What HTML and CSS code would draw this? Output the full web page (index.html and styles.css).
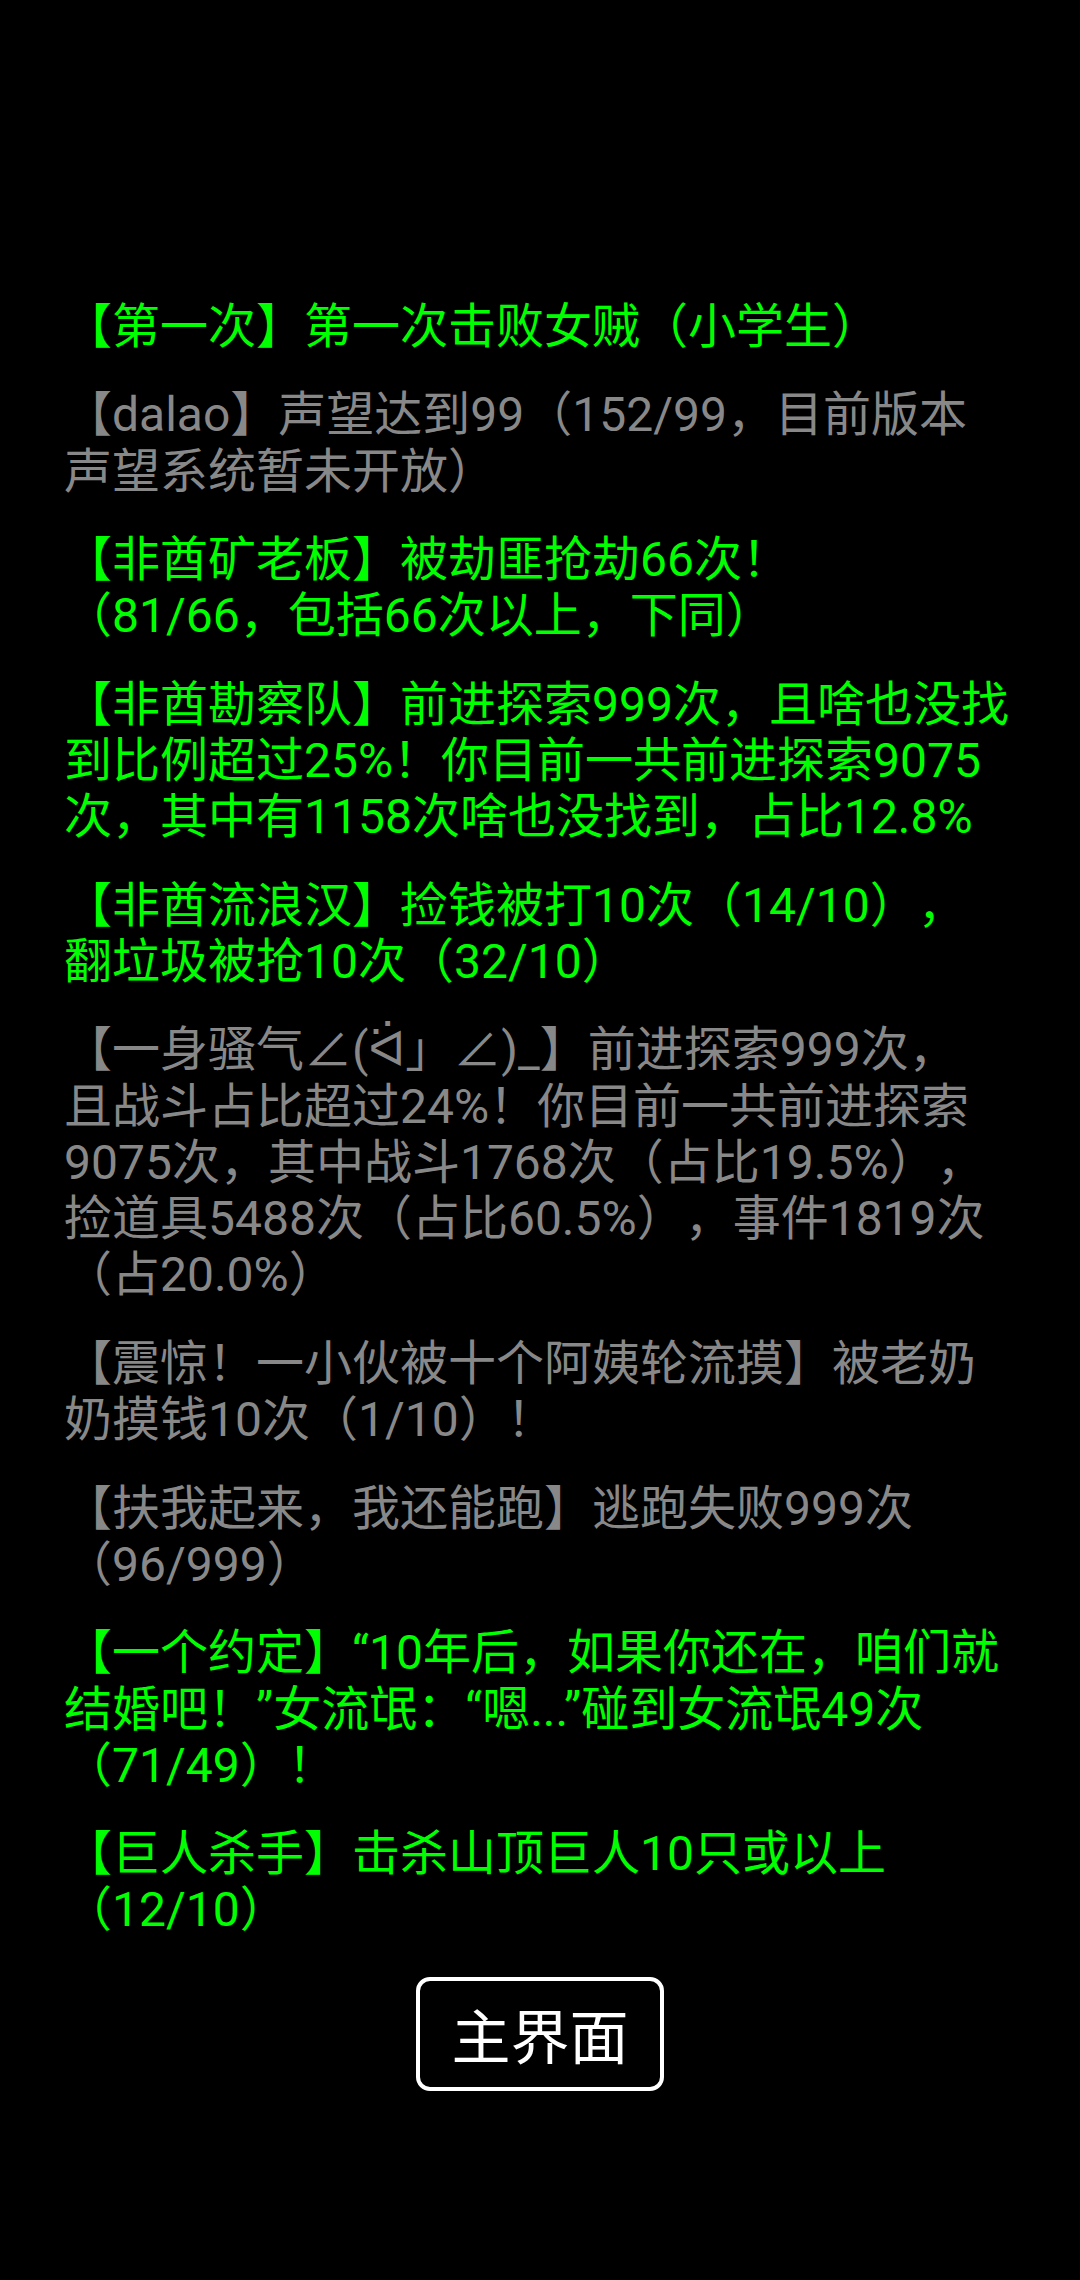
FILE: index.html
```html
<!DOCTYPE html>
<html lang="zh-CN">
<head>
<meta charset="utf-8">
<title>成就</title>
<link rel="stylesheet" href="styles.css">
</head>
<body>
<main class="screen">
  <ul class="achievements">
    <li class="item done">【第一次】第一次击败女贼（小学生）</li>
    <li class="item todo">【dalao】声望达到99（152/99，目前版本<br>声望系统暂未开放）</li>
    <li class="item done">【非酋矿老板】被劫匪抢劫66次！<br>（81/66，包括66次以上，下同）</li>
    <li class="item done">【非酋勘察队】前进探索999次，且啥也没找<br>到比例超过25%！你目前一共前进探索9075<br>次，其中有1158次啥也没找到，占比12.8%</li>
    <li class="item done">【非酋流浪汉】捡钱被打10次（14/10），<br>翻垃圾被抢10次（32/10）</li>
    <li class="item todo">【一身骚气∠(ᐛ」∠)_】前进探索999次，<br>且战斗占比超过24%！你目前一共前进探索<br>9075次，其中战斗1768次（占比19.5%），<br>捡道具5488次（占比60.5%），事件1819次<br>（占20.0%）</li>
    <li class="item todo">【震惊！一小伙被十个阿姨轮流摸】被老奶<br>奶摸钱10次（1/10）！</li>
    <li class="item todo">【扶我起来，我还能跑】逃跑失败999次<br>（96/999）</li>
    <li class="item done">【一个约定】“10年后，如果你还在，咱们就<br>结婚吧！”女流氓：“嗯...”碰到女流氓49次<br>（71/49）！</li>
    <li class="item done">【巨人杀手】击杀山顶巨人10只或以上<br>（12/10）</li>
  </ul>
  <div class="actions">
    <button class="home-btn" type="button">主界面</button>
  </div>
</main>
</body>
</html>
```
FILE: styles.css
```css
html, body {
  margin: 0;
  padding: 0;
  background: #000;
}

body {
  width: 1080px;
  height: 2280px;
  overflow: hidden;
  font-family: Roboto, "Noto Sans CJK SC", "DejaVu Sans", sans-serif;
}

.screen {
  display: flex;
  flex-direction: column;
  padding: 299px 64px 0 64px;
}

.achievements {
  list-style: none;
  margin: 0;
  padding: 0;
  display: flex;
  flex-direction: column;
  gap: 32.2px;
}

.item {
  font-size: 48px;
  line-height: 56.25px;
  white-space: nowrap;
  text-spacing-trim: space-all;
}

.done {
  color: #00ff00;
}

.todo {
  color: #888888;
}

.actions {
  display: flex;
  justify-content: center;
  margin-top: 38px;
}

.home-btn {
  box-sizing: border-box;
  width: 248px;
  height: 114px;
  border: 4px solid #ffffff;
  border-radius: 14px;
  background: #000;
  color: #ffffff;
  font-family: Roboto, "Noto Sans CJK SC", sans-serif;
  font-size: 59px;
  padding: 0;
  display: flex;
  align-items: center;
  justify-content: center;
  text-spacing-trim: space-all;
}
```
